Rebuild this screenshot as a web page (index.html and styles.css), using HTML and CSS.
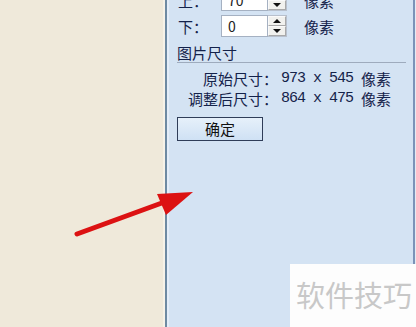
FILE: index.html
```html
<!DOCTYPE html>
<html lang="zh-CN">
<head>
    <meta charset="UTF-8">
    <meta name="viewport" content="width=device-width, initial-scale=1.0">
    <title>图片尺寸</title>
    <link rel="stylesheet" href="styles.css">
</head>
<body>
    <div class="screen">
        <div class="canvas"></div>
        <div class="panel">
            <div class="spin-row first">
                <span class="spin-label">上：</span>
                <div class="spin-input">70</div>
                <div class="spin-btns">
                    <span class="up"></span>
                    <span class="down"></span>
                </div>
                <span class="unit">像素</span>
            </div>
            <div class="spin-row">
                <span class="spin-label">下：</span>
                <div class="spin-input">0</div>
                <div class="spin-btns">
                    <span class="up"></span>
                    <span class="down"></span>
                </div>
                <span class="unit">像素</span>
            </div>

            <div class="group-title">图片尺寸</div>
            <div class="size-row">
                <span class="size-label">原始尺寸：</span>
                <span class="num">973 x 545</span>
                <span class="unit">像素</span>
            </div>
            <div class="size-row">
                <span class="size-label">调整后尺寸：</span>
                <span class="num">864 x 475</span>
                <span class="unit">像素</span>
            </div>
            <button class="btn">确定</button>
        </div>
        <div class="edge"></div>

        <svg class="arrow" width="416" height="327" viewBox="0 0 416 327">
            <line x1="77" y1="234" x2="170" y2="200" stroke="#dc1212" stroke-width="5" stroke-linecap="round"/>
            <polygon points="157,194 193,192 166,215" fill="#dc1212"/>
        </svg>
        <div class="watermark">软件技巧</div>
    </div>
</body>
</html>
```

FILE: styles.css
```css
body {
    margin: 0;
    padding: 0;
    font-family: "Noto Sans CJK SC", sans-serif;
    color: #14224a;
}
.screen {
    position: relative;
    display: flex;
    width: 416px;
    height: 327px;
    overflow: hidden;
}
.canvas {
    width: 163px;
    background-color: #efe9da;
    border-right: 2px solid #f6f2e8;
}
.panel {
    flex: 1;
    background-color: #d4e3f3;
    border-left: 2px solid #6e8aa2;
    border-right: 2px solid #7b93b8;
    box-shadow: inset 2px 0 #e3edf9;
    padding: 0 7px 0 11px;
}
.edge {
    width: 1px;
    background-color: #e4ebf3;
}
.spin-row {
    display: flex;
    align-items: center;
    height: 22px;
    margin-top: 4px;
    font-size: 15px;
}
.spin-row.first {
    margin-top: -11px;
}
.spin-label {
    width: 43px;
}
.spin-input {
    box-sizing: border-box;
    width: 47px;
    height: 22px;
    background-color: #fff;
    border: 1px solid #a5b1c2;
    padding-left: 6px;
    font-size: 14px;
    line-height: 20px;
    color: #222;
}
.spin-btns {
    box-sizing: border-box;
    display: flex;
    flex-direction: column;
    width: 19px;
    height: 22px;
    border: 1px solid #b8c0cc;
    border-left: none;
    background-color: #f1f1ee;
}
.spin-btns span {
    flex: 1;
    display: flex;
    align-items: center;
    justify-content: center;
    border: 1px solid #fafafa;
    border-right-color: #a9a9a9;
    border-bottom-color: #a9a9a9;
}
.spin-btns .up::after {
    content: "";
    border-left: 4px solid transparent;
    border-right: 4px solid transparent;
    border-bottom: 4px solid #111;
}
.spin-btns .down::after {
    content: "";
    border-left: 4px solid transparent;
    border-right: 4px solid transparent;
    border-top: 4px solid #111;
}
.spin-row .unit {
    margin-left: 17px;
}
.group-title {
    margin-top: 7px;
    margin-left: -1px;
    font-size: 15px;
    line-height: 17px;
    border-bottom: 1px solid #9eabbd;
    padding-bottom: 1px;
}
.size-row {
    display: flex;
    align-items: center;
    height: 20px;
    font-size: 15px;
}
.size-row:first-of-type,
.group-title + .size-row {
    margin-top: 5px;
}
.size-label {
    width: 100px;
    text-align: right;
}
.num {
    margin-left: 3px;
    width: 72px;
    font-family: "Liberation Mono", monospace;
    letter-spacing: -1px;
}
.size-row .unit {
    margin-left: 8px;
}
.btn {
    display: block;
    margin-top: 9px;
    margin-left: -1px;
    width: 86px;
    height: 24px;
    padding: 0;
    font-family: "Noto Sans CJK SC", sans-serif;
    font-size: 15px;
    line-height: 20px;
    color: #111;
    background: linear-gradient(#e6f0fa, #cfe1f4);
    border: 1px solid #2f3d58;
}
.arrow {
    position: absolute;
    left: 0;
    top: 0;
}
.watermark {
    position: absolute;
    left: 290px;
    top: 264px;
    width: 126px;
    height: 63px;
    background-color: #fdfdfd;
    color: #c8c8c8;
    font-size: 29px;
    line-height: 60px;
    padding-left: 6px;
    box-sizing: border-box;
    letter-spacing: 0;
}
```
